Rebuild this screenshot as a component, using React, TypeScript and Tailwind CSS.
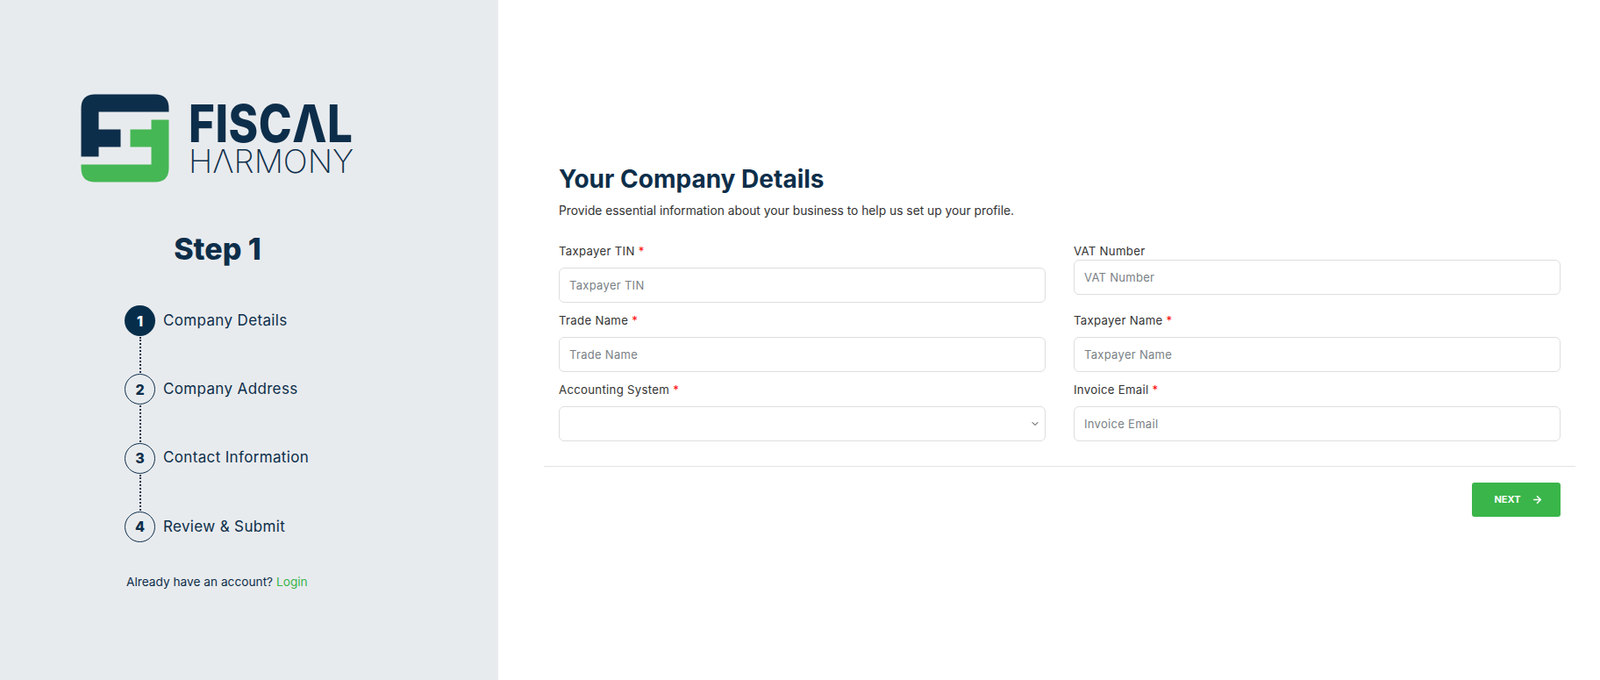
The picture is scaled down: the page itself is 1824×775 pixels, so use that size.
import { ArrowRight, ChevronDown } from "lucide-react";

const font = "[font-family:Inter,'Noto_Sans',sans-serif]";

function LogoMark() {
  return (
    <svg width="101" height="101" viewBox="0 0 101 101" className="block shrink-0">
      <path d="M0 16Q0 0 16 0H84Q100 0 100 16V20H20V40H45V60H20V71H0Z" fill="#0d2e4a" transform="translate(0.5 0.5)" />
      <path d="M80 29H100V84Q100 100 84 100H16Q0 100 0 84V80H80V60H56V40H80Z" fill="#46b755" transform="translate(0.5 0.5)" />
    </svg>
  );
}

function Step({ n, label, active, last }: { n: number; label: string; active?: boolean; last?: boolean }) {
  return (
    <div className="flex flex-col">
      <div className="flex items-center gap-[9px]">
        <div className={active ? "w-[35px] h-[35px] rounded-full bg-[#062e4a] text-white flex items-center justify-center text-[16px] font-extrabold" : "w-[35px] h-[35px] rounded-full border border-[#0d2e4a] text-[#0d2e4a] flex items-center justify-center text-[16px] font-extrabold"}>
          {n}
        </div>
        <span className="text-[17px] tracking-[0.35px] text-[#0d2e4a]">{label}</span>
      </div>
      {!last && <div className="ml-[16.5px] h-[41.3px] border-l-2 border-dotted border-[#0d2e4a] my-[1px]" />}
    </div>
  );
}

function Field({ label, required, gap }: { label: string; required?: boolean; gap: string }) {
  return (
    <div>
      <label className={`block h-[20px] text-[13.2px] tracking-[0.3px] leading-[20px] text-[#333] ${gap}`}>
        {label}
        {required && <span className="text-[#f00]"> *</span>}
      </label>
      <input
        placeholder={label}
        className="block w-full h-[40px] rounded-[6px] border border-[#dedede] bg-white px-[11px] text-[13px] tracking-[0.3px] text-[#333] placeholder:text-[#7a7f85] outline-none"
      />
    </div>
  );
}

export default function App() {
  return (
    <div className={`flex h-[775px] w-full bg-white overflow-hidden ${font}`}>
      <aside className="w-[568px] shrink-0 bg-[#e8ebee] flex flex-col pt-[107px]">
        <div className="pl-[92px] flex items-start gap-[22px]">
          <LogoMark />
          <div className="flex flex-col pt-[6px]">
            <span className="block h-[56px] w-[215px] text-[59px] leading-[56px] font-extrabold tracking-[0.6px] text-[#0d2e4a] origin-left scale-x-[0.865]">FISCΛL</span>
            <span className="block h-[30px] w-[190px] text-[37px] leading-[30px] font-extralight text-[#0d2e4a]">HΛRMONY</span>
          </div>
        </div>
        <h2 className="mt-[56px] text-center text-[34px] leading-[40px] font-extrabold text-[#0d2e4a] pr-[72px]">Step 1</h2>
        <div className="mt-[44px] pl-[142px]">
          <Step n={1} label="Company Details" active />
          <Step n={2} label="Company Address" />
          <Step n={3} label="Contact Information" />
          <Step n={4} label="Review & Submit" last />
        </div>
        <p className="mt-[35px] pl-[144px] text-[13.7px] leading-[20px] text-[#0d2e4a]">
          Already have an account? <a className="text-[#3ab54a]">Login</a>
        </p>
      </aside>
      <main className="flex-1 pl-[52px] pr-[28px] pt-[186px]">
        <div className="px-[17px]">
          <h1 className="text-[28px] leading-[36px] font-bold text-[#0d2e4a]">Your Company Details</h1>
          <p className="mt-[8px] text-[13.8px] leading-[20px] text-[#333]">Provide essential information about your business to help us set up your profile.</p>
          <div className="mt-[26px] grid grid-cols-2 gap-x-[32px] gap-y-[10px]">
            <Field label="Taxpayer TIN" required gap="mb-[9px]" />
            <Field label="VAT Number" gap="mb-0" />
            <Field label="Trade Name" required gap="mb-[9px]" />
            <Field label="Taxpayer Name" required gap="mb-[9px]" />
            <div>
              <label className="block h-[20px] mb-[9px] text-[13.2px] tracking-[0.3px] leading-[20px] text-[#333]">
                Accounting System<span className="text-[#f00]"> *</span>
              </label>
              <div className="relative">
                <select className="block w-full h-[40px] rounded-[6px] border border-[#dedede] bg-white px-[11px] text-[13px] appearance-none outline-none" />
                <ChevronDown className="absolute right-[6px] top-[14px] w-[12px] h-[12px] text-[#333]" strokeWidth={2} />
              </div>
            </div>
            <Field label="Invoice Email" required gap="mb-[9px]" />
          </div>
        </div>
        <div className="mt-[28px] border-t border-[#e2e2e2]" />
        <div className="mt-[18px] flex justify-end pr-[17px]">
          <button className="w-[101px] h-[39px] pl-[5px] rounded-[3px] bg-[#3ab54a] text-white text-[11px] font-bold flex items-center justify-center gap-[12px]">
            NEXT <ArrowRight className="w-[13px] h-[13px]" strokeWidth={3} />
          </button>
        </div>
      </main>
    </div>
  );
}
